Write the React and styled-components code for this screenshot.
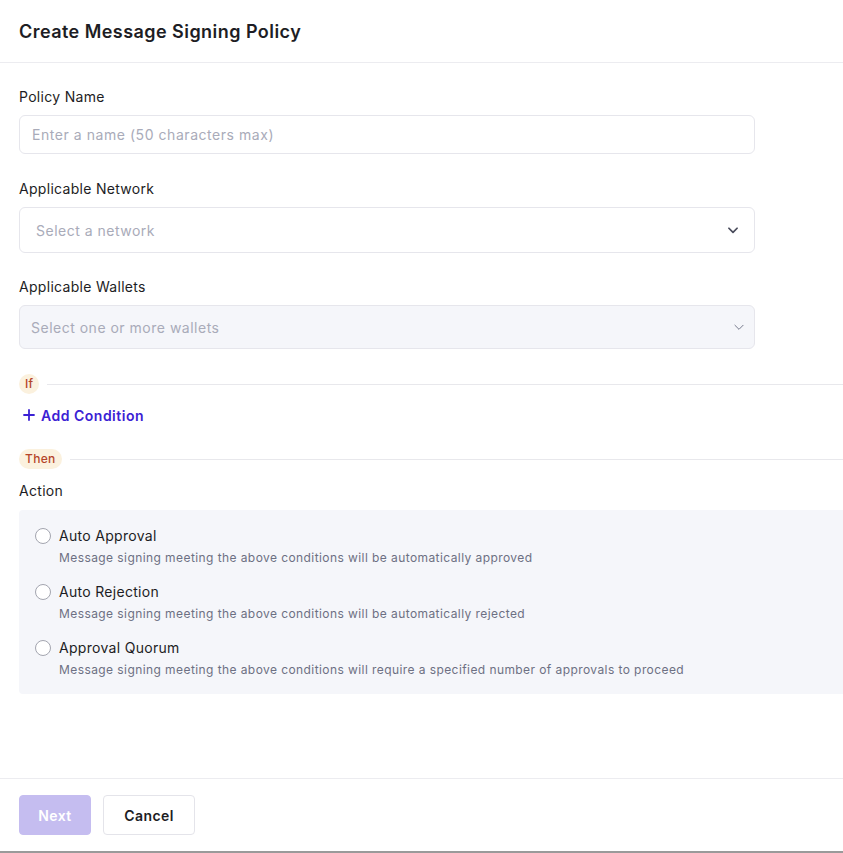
import React from "react"
import styled, { createGlobalStyle } from "styled-components"

const GlobalStyle = createGlobalStyle`
  html, body {
    margin: 0;
    padding: 0;
    background: #fff;
    overflow: hidden;
  }
  body {
    font-family: Inter, "Open Sans", sans-serif;
    color: #1d1d24;
  }
`

const Page = styled.div`
  width: 843px;
  height: 853px;
  display: flex;
  flex-direction: column;
  box-sizing: border-box;
  border-bottom: 2px solid #9a9a9a;
`

const Header = styled.div`
  height: 63px;
  box-sizing: border-box;
  padding: 0 19px;
  display: flex;
  align-items: center;
  border-bottom: 1px solid #ececf0;
`

const Title = styled.h1`
  margin: 0;
  font-size: 18px;
  font-weight: 600;
  letter-spacing: 0.45px;
`

const Body = styled.div`
  flex: 1;
  padding: 24px 0 0 19px;
  display: flex;
  flex-direction: column;
`

const Field = styled.div`
  display: flex;
  flex-direction: column;
  gap: 8px;
  margin-bottom: ${(p) => p.$mb || 25}px;
`

const Label = styled.label`
  font-size: 14px;
  line-height: 20px;
  letter-spacing: 0.3px;
  color: #1d1d24;
  margin-top: ${(p) => p.$mt || 0}px;
`

const TextInput = styled.input`
  width: 736px;
  height: 39px;
  box-sizing: border-box;
  border: 1px solid #e6e6ec;
  border-radius: 6px;
  padding: 0 12px;
  font-family: inherit;
  font-size: 14px;
  letter-spacing: 0.55px;
  outline: none;
  &::placeholder {
    color: #a9abb9;
  }
`

const Select = styled.div`
  width: 736px;
  height: ${(p) => p.$h}px;
  box-sizing: border-box;
  border: 1px solid #e6e6ec;
  border-radius: 6px;
  padding: 0 ${(p) => (p.$disabled ? 8 : 14)}px 0 ${(p) => (p.$disabled ? 11 : 16)}px;
  display: flex;
  align-items: center;
  justify-content: space-between;
  background: ${(p) => (p.$disabled ? "#f5f6fa" : "#fff")};
  font-size: 14px;
  letter-spacing: 0.5px;
  color: #a9abb9;
`

const Divider = styled.div`
  display: flex;
  align-items: center;
  gap: 8px;
`

const Badge = styled.span`
  height: 20px;
  padding: 0 6px;
  border-radius: 10px;
  background: #fbf1de;
  color: #b5452a;
  font-size: 12px;
  line-height: 20px;
  font-weight: 500;
  letter-spacing: 0.3px;
`

const Line = styled.div`
  flex: 1;
  height: 1px;
  background: #e8e8ec;
`

const AddButton = styled.button`
  align-self: flex-start;
  display: flex;
  align-items: center;
  gap: 6px;
  border: none;
  background: none;
  height: 20px;
  padding: 0 0 0 4px;
  margin: 11px 0 24px;
  font-family: inherit;
  font-size: 14px;
  font-weight: 600;
  letter-spacing: 0.5px;
  color: #3b21d4;
  cursor: pointer;
`

const ActionBox = styled.div`
  margin-top: 9px;
  background: #f5f6fa;
  border-radius: 4px 0 0 4px;
  padding: 16px 16px 15px;
  display: flex;
  flex-direction: column;
  gap: 15px;
`

const Option = styled.div`
  display: grid;
  grid-template-columns: 16px 1fr;
  column-gap: 8px;
  row-gap: 3px;
  align-items: center;
`

const Radio = styled.span`
  width: 16px;
  height: 16px;
  box-sizing: border-box;
  border: 1px solid #a3a5af;
  border-radius: 50%;
  background: #fff;
`

const OptionTitle = styled.div`
  font-size: 14px;
  line-height: 20px;
  letter-spacing: 0.3px;
`

const OptionDesc = styled.div`
  grid-column: 2;
  font-size: 12px;
  line-height: 18px;
  letter-spacing: 0.42px;
  color: #6d7083;
`

const Footer = styled.div`
  height: 73px;
  box-sizing: border-box;
  border-top: 1px solid #ececf0;
  padding: 0 19px;
  display: flex;
  align-items: center;
  gap: 12px;
`

const Button = styled.button`
  height: 40px;
  padding: 0;
  width: ${(p) => (p.$primary ? 72 : 92)}px;
  border-radius: 4px;
  border: 1px solid ${(p) => (p.$primary ? "#c5bdf0" : "#e4e4ea")};
  background: ${(p) => (p.$primary ? "#c5bdf0" : "#fff")};
  color: ${(p) => (p.$primary ? "#fff" : "#1d1d24")};
  font-family: inherit;
  font-size: 14px;
  font-weight: 600;
  letter-spacing: 0.4px;
`

const Chevron = ({ thin }) => (
  <svg width="14" height="14" viewBox="0 0 24 24" fill="none" stroke={thin ? "#6d7083" : "#4a4c5c"} strokeWidth={thin ? 1.6 : 3} strokeLinecap="round" strokeLinejoin="round">
    <path d="M5 9l7 7 7-7" />
  </svg>
)

const options = [
  ["Auto Approval", "Message signing meeting the above conditions will be automatically approved"],
  ["Auto Rejection", "Message signing meeting the above conditions will be automatically rejected"],
  ["Approval Quorum", "Message signing meeting the above conditions will require a specified number of approvals to proceed"],
]

export default function App() {
  return (
    <Page>
      <GlobalStyle />
      <Header>
        <Title>Create Message Signing Policy</Title>
      </Header>
      <Body>
        <Field>
          <Label>Policy Name</Label>
          <TextInput placeholder="Enter a name (50 characters max)" />
        </Field>
        <Field $mb={24}>
          <Label>Applicable Network</Label>
          <Select $h={46}>
            Select a network
            <Chevron />
          </Select>
        </Field>
        <Field $mb={25}>
          <Label>Applicable Wallets</Label>
          <Select $h={44} $disabled>
            Select one or more wallets
            <Chevron thin />
          </Select>
        </Field>
        <Divider>
          <Badge>If</Badge>
          <Line />
        </Divider>
        <AddButton>
          <svg width="12" height="12" viewBox="0 0 12 12" stroke="#3b21d4" strokeWidth="1.8" strokeLinecap="round">
            <path d="M6 1v10M1 6h10" />
          </svg>
          Add Condition
        </AddButton>
        <Divider>
          <Badge>Then</Badge>
          <Line />
        </Divider>
        <Label $mt={12}>Action</Label>
        <ActionBox>
          {options.map(([t, d]) => (
            <Option key={t}>
              <Radio />
              <OptionTitle>{t}</OptionTitle>
              <OptionDesc>{d}</OptionDesc>
            </Option>
          ))}
        </ActionBox>
      </Body>
      <Footer>
        <Button $primary>Next</Button>
        <Button>Cancel</Button>
      </Footer>
    </Page>
  )
}
